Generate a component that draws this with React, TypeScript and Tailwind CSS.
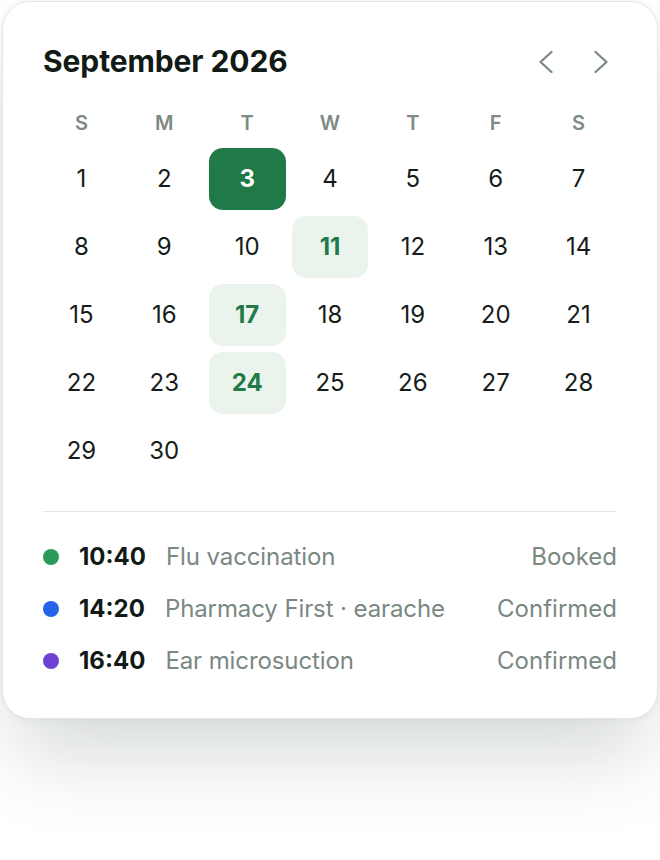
import React from "react";

const font = { fontFamily: "Inter, 'Noto Sans', sans-serif" };

const weekdays = ["S", "M", "T", "W", "T", "F", "S"];

type Appt = { dot: string; time: string; desc: string; status: string };
const appts: Appt[] = [
  { dot: "bg-[#2a9a5a]", time: "10:40", desc: "Flu vaccination", status: "Booked" },
  { dot: "bg-[#2563eb]", time: "14:20", desc: "Pharmacy First · earache", status: "Confirmed" },
  { dot: "bg-[#6f42d6]", time: "16:40", desc: "Ear microsuction", status: "Confirmed" },
];

function Chevron({ dir }: { dir: "left" | "right" }) {
  return (
    <svg width="14" height="24" viewBox="0 0 14 24" fill="none">
      <polyline
        points={dir === "left" ? "12.5,2 1.5,12 12.5,22" : "1.5,2 12.5,12 1.5,22"}
        stroke="#7a8883"
        strokeWidth="2.2"
        strokeLinecap="round"
        strokeLinejoin="round"
      />
    </svg>
  );
}

export default function App() {
  const cells: number[] = [];
  for (let d = 1; d <= 30; d++) cells.push(d);

  return (
    <div className="min-h-[860px] bg-white" style={font}>
      <div className="ml-[2px] mt-[1px] w-[656px] rounded-[28px] border border-[#e3e7e4] bg-white shadow-[0_0_6px_rgba(20,40,30,0.07),0_50px_80px_-12px_rgba(20,45,32,0.17)]">
        <div className="px-10 pt-[39px] pb-[31px]">
          <div className="flex h-[42px] items-center justify-between">
            <div className="-mt-[1px] text-[30px] font-bold tracking-[-0.1px] text-[#121a16]">
              September 2026
            </div>
            <div className="mr-[9px] flex items-center gap-[41px]">
              <Chevron dir="left" />
              <Chevron dir="right" />
            </div>
          </div>

          <div className="mt-[28px] grid grid-cols-7 gap-x-[6px]">
            {weekdays.map((w, i) => (
              <div
                key={i}
                className="flex h-[24px] items-center justify-center text-[20px] font-semibold text-[#7d8a85]"
              >
                {w}
              </div>
            ))}
          </div>

          <div className="mt-[13px] grid grid-cols-7 gap-[6px]">
            {cells.map((d) => {
              let cls = "text-[#161c19] font-normal";
              if (d === 3) cls = "bg-[#207a48] text-white font-bold";
              else if (d === 11 || d === 17 || d === 24)
                cls = "bg-[#eaf4ed] text-[#237a48] font-bold";
              return (
                <div
                  key={d}
                  className={`flex h-[62px] items-center justify-center rounded-[14px] text-[24px] ${cls}`}
                >
                  {d}
                </div>
              );
            })}
          </div>

          <div className="mt-[29px] h-px bg-[#e3e7e4]" />

          <div className="mt-[19px] flex flex-col">
            {appts.map((a) => (
              <div key={a.time} className="flex h-[52px] items-center text-[24px]">
                <span className={`h-[16px] w-[16px] shrink-0 rounded-full ${a.dot}`} />
                <span className="ml-[20px] font-bold text-[#121a16]">{a.time}</span>
                <span className="ml-[20px] tracking-[-0.1px] text-[#7a8882]">{a.desc}</span>
                <span className="ml-auto text-[#7a8882]">{a.status}</span>
              </div>
            ))}
          </div>
        </div>
      </div>
    </div>
  );
}
